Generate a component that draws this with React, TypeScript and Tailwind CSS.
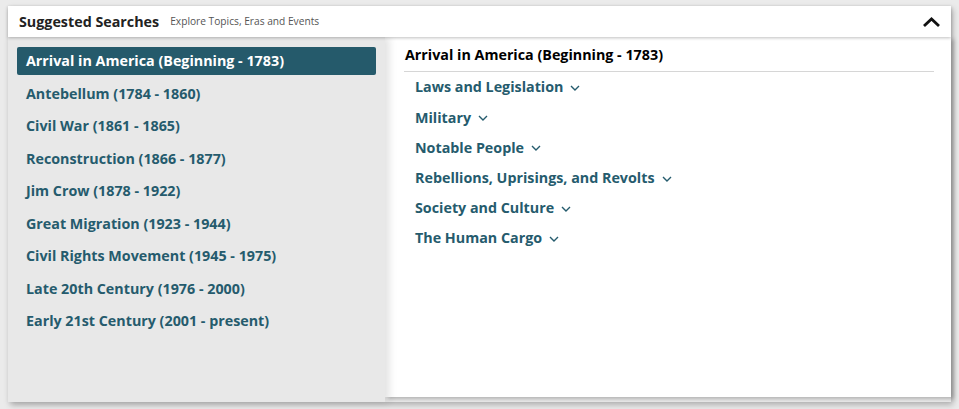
const eras = [
  "Arrival in America (Beginning - 1783)",
  "Antebellum (1784 - 1860)",
  "Civil War (1861 - 1865)",
  "Reconstruction (1866 - 1877)",
  "Jim Crow (1878 - 1922)",
  "Great Migration (1923 - 1944)",
  "Civil Rights Movement (1945 - 1975)",
  "Late 20th Century (1976 - 2000)",
  "Early 21st Century (2001 - present)",
];

const topics = [
  "Laws and Legislation",
  "Military",
  "Notable People",
  "Rebellions, Uprisings, and Revolts",
  "Society and Culture",
  "The Human Cargo",
];

function ChevronDown() {
  return (
    <svg width="10" height="6" viewBox="0 0 10 6" className="ml-[7px] mt-[2px]">
      <polyline points="1,1 5,5 9,1" fill="none" stroke="#255b6d" strokeWidth="1.4" />
    </svg>
  );
}

export default function App() {
  const active = 0;

  return (
    <div className="min-h-screen bg-[#ebebeb] pt-[6px] pl-2 pr-[8px] font-['Open_Sans',sans-serif]">
      <div className="shadow-[2px_3px_6px_rgba(0,0,0,0.25)]">
        <div className="relative z-20 flex h-[31px] items-center bg-white pl-[11px] pr-[10px] shadow-[0_1px_3px_rgba(0,0,0,0.25)]">
          <span className="text-[14.3px] font-bold text-[#222]">Suggested Searches</span>
          <span className="ml-[11px] text-[10.2px] text-[#555]">Explore Topics, Eras and Events</span>
          <svg width="19" height="12" viewBox="0 0 19 12" className="ml-auto">
            <polyline points="2,10 9.5,3 17,10" fill="none" stroke="#111" strokeWidth="2.8" />
          </svg>
        </div>

        <div className="flex h-[365px] items-start bg-[#ebebeb]">
          <div className="relative z-10 flex h-[365px] w-[377px] shrink-0 flex-col gap-[4.5px] bg-[#e8e8e8] px-[9px] pt-[10px] shadow-[4px_0_8px_rgba(0,0,0,0.12)]">
            {eras.map((era, i) => (
              <div
                key={era}
                className={`flex h-[28px] items-center rounded-[2px] px-[9px] text-[14.3px] font-bold ${
                  i === active ? "bg-[#255a6b] text-white" : "text-[#255b6d]"
                }`}
              >
                {era}
              </div>
            ))}
          </div>

          <div className="h-[360px] flex-1 bg-white pl-[19px] pr-[17px] pt-[8px] shadow-[3px_2px_4px_rgba(0,0,0,0.25)]">
            <div className="border-b border-[#d6d6d6] pb-[6px] pl-px text-[14.3px] font-bold leading-[20px] text-black">
              {eras[active]}
            </div>
            {topics.map((t) => (
              <div
                key={t}
                className="flex h-[30.2px] items-center pl-[11px] text-[14.3px] font-bold text-[#255b6d]"
              >
                {t}
                <ChevronDown />
              </div>
            ))}
          </div>
        </div>
      </div>
    </div>
  );
}
